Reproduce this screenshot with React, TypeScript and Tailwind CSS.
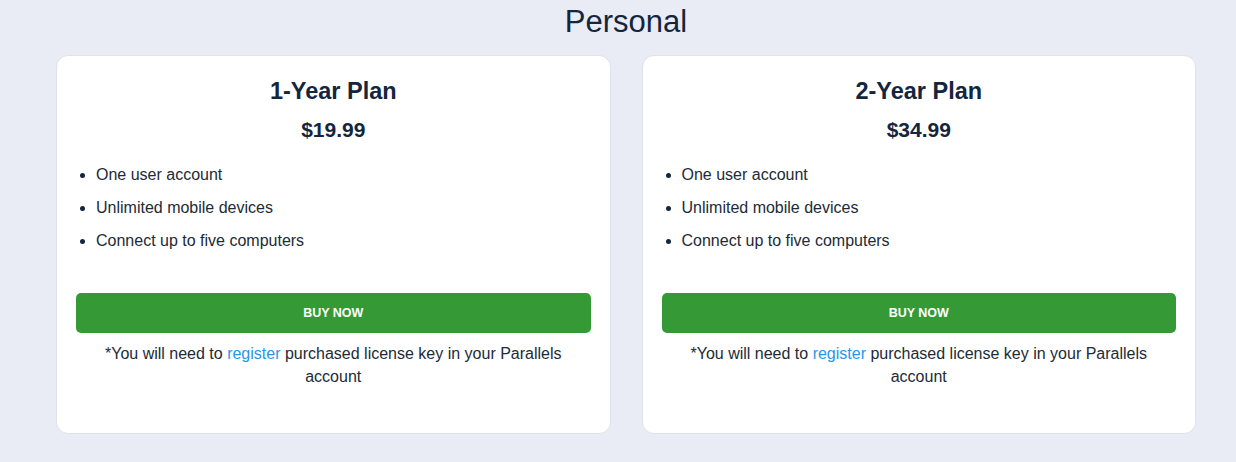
const plans = [
  { name: "1-Year Plan", price: "$19.99" },
  { name: "2-Year Plan", price: "$34.99" },
];

const features = ["One user account", "Unlimited mobile devices", "Connect up to five computers"];

function PlanCard({ name, price }: { name: string; price: string }) {
  return (
    <div className="flex-1 rounded-[12px] border border-[#dfe2e8] bg-white px-[19px] pt-[21px] pb-[45px]">
      <h3 className="text-center text-[23.5px] font-bold leading-[28px] text-[#13263d]">{name}</h3>
      <div className="mt-[13px] text-center text-[21px] font-bold leading-[24px] text-[#13263d]">{price}</div>
      <ul className="mt-[16px] list-disc pl-[20px] text-[16px] text-[#212b36]">
        {features.map((f) => (
          <li key={f} className="leading-[33px] marker:text-[#13263d]">
            {f}
          </li>
        ))}
      </ul>
      <button className="mt-[36px] h-[40px] w-full rounded-[5px] bg-[#359a35] text-[12.5px] font-bold text-white">
        BUY NOW
      </button>
      <p className="mx-auto mt-[9px] max-w-[480px] text-center text-[16px] leading-[23px] text-[#212b36]">
        *You will need to <a className="text-[#2b95e9]">register</a> purchased license key in your Parallels account
      </p>
    </div>
  );
}

export default function App() {
  return (
    <div
      className="min-h-[462px] bg-[#e9ecf4] pl-[56px] pr-[40px]"
      style={{ fontFamily: '"Liberation Sans", Arial, sans-serif' }}
    >
      <h2 className="pt-[2px] text-center text-[31px] leading-[40px] text-[#13263d]">Personal</h2>
      <div className="mt-[13px] flex gap-[31px]">
        {plans.map((p) => (
          <PlanCard key={p.name} {...p} />
        ))}
      </div>
    </div>
  );
}
